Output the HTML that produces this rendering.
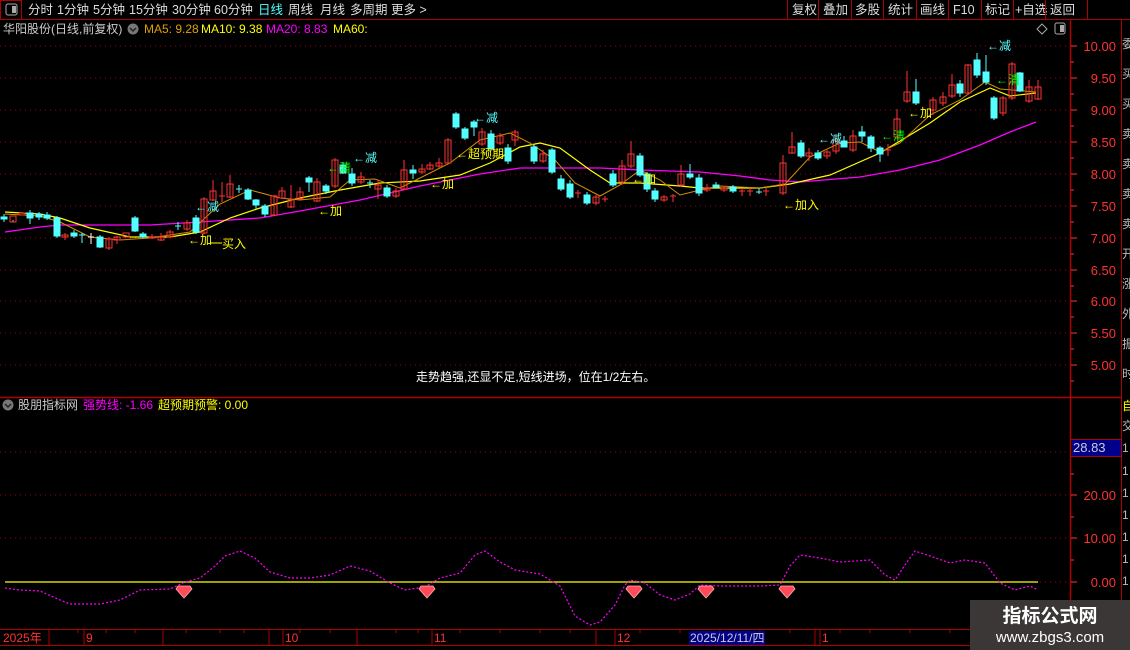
<!DOCTYPE html>
<html><head><meta charset="utf-8"><style>
body{margin:0;background:#000;width:1130px;height:650px;overflow:hidden;font-family:"Liberation Sans","Noto Sans CJK SC",sans-serif;font-size:12px;color:#ccc;position:relative}
.a{position:absolute;white-space:nowrap}
</style></head><body>
<svg width="1130" height="650" style="position:absolute;left:0;top:0" font-family="Liberation Sans, Noto Sans CJK SC, sans-serif" font-size="12">
<!-- top bar -->
<line x1="0" y1="19.5" x2="1130" y2="19.5" stroke="#b00000"/>
<rect x="0.5" y="0.5" width="21" height="19" fill="none" stroke="#b00000"/>
<rect x="6" y="4" width="11" height="11" rx="2" fill="none" stroke="#aaa"/><rect x="12" y="6" width="4" height="7" fill="#aaa"/>
<g fill="#ddd" font-size="12.5">
<text x="28" y="14">分时</text><text x="57" y="14">1分钟</text><text x="93" y="14">5分钟</text><text x="129" y="14">15分钟</text><text x="172" y="14">30分钟</text><text x="214" y="14">60分钟</text>
<text x="258" y="14" fill="#54ffff">日线</text><text x="288" y="14">周线</text><text x="320" y="14">月线</text><text x="350" y="14">多周期</text><text x="391" y="14">更多 &gt;</text>
<text x="792" y="14">复权</text><text x="823" y="14">叠加</text><text x="855" y="14">多股</text><text x="888" y="14">统计</text><text x="920" y="14">画线</text><text x="953" y="14">F10</text><text x="985" y="14">标记</text><text x="1015" y="14">+自选</text><text x="1050" y="14">返回</text>
</g>
<g stroke="#b00000"><line x1="787.5" y1="0" x2="787.5" y2="19"/><line x1="818.5" y1="0" x2="818.5" y2="19"/><line x1="851.5" y1="0" x2="851.5" y2="19"/><line x1="883.5" y1="0" x2="883.5" y2="19"/><line x1="916.5" y1="0" x2="916.5" y2="19"/><line x1="948.5" y1="0" x2="948.5" y2="19"/><line x1="981.5" y1="0" x2="981.5" y2="19"/><line x1="1013.5" y1="0" x2="1013.5" y2="19"/><line x1="1045.5" y1="0" x2="1045.5" y2="19"/><line x1="1087.5" y1="0" x2="1087.5" y2="19"/></g>
<!-- title -->
<text x="3" y="33" fill="#ccc">华阳股份(日线,前复权)</text>
<circle cx="133" cy="29" r="5.5" fill="#777"/><path d="M130 28l3 3 3-3" stroke="#222" fill="none" stroke-width="1.5"/>
<text x="144" y="33" fill="#e0a000">MA5: 9.28</text><text x="201" y="33" fill="#ffff00">MA10: 9.38</text><text x="266" y="33" fill="#ff00ff">MA20: 8.83</text><text x="333" y="33" fill="#ffff00">MA60:</text>
<path d="M1042 24l5 5-5 5-5-5z" fill="none" stroke="#aaa"/>
<rect x="1055" y="23" width="10" height="11" rx="2" fill="none" stroke="#aaa"/><rect x="1060" y="25" width="4" height="7" fill="#aaa"/>
<!-- frame -->
<line x1="1070.5" y1="20" x2="1070.5" y2="650" stroke="#b00000" stroke-width="1.5"/>
<line x1="1121.5" y1="20" x2="1121.5" y2="650" stroke="#b00000"/>
<line x1="0" y1="397.5" x2="1121" y2="397.5" stroke="#b00000" stroke-width="1.5"/>
<line x1="0" y1="629.5" x2="1070" y2="629.5" stroke="#b00000"/>
<line x1="0" y1="645.5" x2="1070" y2="645.5" stroke="#b00000"/>
<!-- grid -->
<g stroke="#a00000" stroke-dasharray="1 4">
<line x1="0" y1="46" x2="1068" y2="46"/><line x1="0" y1="78" x2="1068" y2="78"/><line x1="0" y1="110" x2="1068" y2="110"/><line x1="0" y1="142" x2="1068" y2="142"/><line x1="0" y1="174" x2="1068" y2="174"/><line x1="0" y1="206" x2="1068" y2="206"/><line x1="0" y1="238" x2="1068" y2="238"/><line x1="0" y1="270" x2="1068" y2="270"/><line x1="0" y1="301" x2="1068" y2="301"/><line x1="0" y1="333" x2="1068" y2="333"/><line x1="0" y1="365" x2="1068" y2="365"/>
<line x1="0" y1="452" x2="1068" y2="452"/><line x1="0" y1="495" x2="1068" y2="495"/><line x1="0" y1="538" x2="1068" y2="538"/><line x1="1040" y1="582" x2="1068" y2="582"/>
</g>
<!-- price axis -->
<g fill="#ff3232" font-size="13" text-anchor="end">
<text x="1116" y="51">10.00</text><text x="1116" y="83">9.50</text><text x="1116" y="115">9.00</text><text x="1116" y="147">8.50</text><text x="1116" y="179">8.00</text><text x="1116" y="211">7.50</text><text x="1116" y="243">7.00</text><text x="1116" y="275">6.50</text><text x="1116" y="306">6.00</text><text x="1116" y="338">5.50</text><text x="1116" y="370">5.00</text>
<text x="1116" y="500">20.00</text><text x="1116" y="543">10.00</text><text x="1116" y="587">0.00</text>
</g>
<g stroke="#ff3232"><path d="M1071 46h6M1071 62h3M1071 78h6M1071 94h3M1071 110h6M1071 126h3M1071 142h6M1071 158h3M1071 174h6M1071 190h3M1071 206h6M1071 222h3M1071 238h6M1071 254h3M1071 270h6M1071 286h3M1071 301h6M1071 317h3M1071 333h6M1071 349h3M1071 365h6M1071 381h3M1071 495h6M1071 538h6M1071 582h6M1071 474h3M1071 517h3M1071 560h3"/></g>
<rect x="1072" y="440" width="49" height="16" fill="#00008b"/><line x1="1071" y1="439.5" x2="1121" y2="439.5" stroke="#b00000"/><line x1="1071" y1="456.5" x2="1121" y2="456.5" stroke="#b00000"/>
<text x="1073" y="452" fill="#ccc" font-size="13">28.83</text>
<g fill="#bbb" font-size="12"><text x="1122" y="48">委</text><text x="1122" y="78">买</text><text x="1122" y="108">买</text><text x="1122" y="138">卖</text><text x="1122" y="168">卖</text><text x="1122" y="198">卖</text><text x="1122" y="228">卖</text><text x="1122" y="258">开</text><text x="1122" y="288">涨</text><text x="1122" y="318">外</text><text x="1122" y="348">振</text><text x="1122" y="378">时</text>
<text x="1122" y="410" fill="#ffff00">自</text><text x="1122" y="430">交</text><text x="1122" y="452">1</text><text x="1122" y="475">1</text><text x="1122" y="497">1</text><text x="1122" y="519">1</text><text x="1122" y="541">1</text><text x="1122" y="563">1</text><text x="1122" y="585">1</text></g>
<!-- MA lines -->
<polyline fill="none" stroke="#ff00ff" stroke-width="1.3" points="5,232 40,227 60,225 100,225 150,225 200,222 260,218 300,211 360,200 420,186 480,174 520,168 540,168 600,168 640,170 700,172 740,176 770,180 800,182 860,177 900,170 940,160 980,145 1010,132 1036,122"/>
<polyline fill="none" stroke="#ffff00" stroke-width="1.2" points="5,212 40,214 60,218 90,228 130,237 170,237 200,232 230,218 260,208 300,198 340,190 380,183 420,181 460,175 490,163 520,147 540,143 560,148 590,170 610,183 640,183 680,186 700,188 720,188 760,188 790,184 830,175 880,153 930,123 960,102 990,88 1010,96 1036,93"/>
<polyline fill="none" stroke="#d09000" stroke-width="1" points="5,214 40,216 60,222 90,237 120,240 150,238 190,232 220,204 250,190 280,198 300,200 330,197 350,180 375,179 400,188 420,178 450,163 480,140 510,133 530,143 555,160 575,183 600,196 620,185 640,170 660,180 680,195 700,190 720,186 760,188 785,184 810,157 840,143 860,142 880,152 900,143 930,115 960,100 985,82 1000,89 1036,92"/>
<!-- candles -->
<g stroke-width="1">
<g fill="#54ffff" stroke="#54ffff">
<path d="M4 214v8M13 220v2"/><rect x="1" y="217" width="6" height="2"/>
<path d="M30 210v14"/><rect x="27" y="213" width="6" height="5"/>
<path d="M39 212v8"/><rect x="36" y="214" width="6" height="3"/>
<path d="M47 212v8"/><rect x="44" y="215" width="6" height="3"/>
<path d="M57 216v22"/><rect x="54" y="218" width="6" height="18"/>
<path d="M74 230v8"/><rect x="71" y="233" width="6" height="3"/>
<path d="M82 233v10M79 235h6"/>
<path d="M100 235v13"/><rect x="97" y="237" width="6" height="10"/>
<path d="M135 216v16"/><rect x="132" y="218" width="6" height="13"/>
<path d="M143 232v6"/><rect x="140" y="234" width="6" height="3"/>
<path d="M178 222v8M175 226h6"/>
<path d="M196 215v19"/><rect x="193" y="218" width="6" height="14"/>
<path d="M239 185v8M236 189h6"/>
<path d="M248 188v12"/><rect x="245" y="190" width="6" height="9"/>
<path d="M256 199v10"/><rect x="253" y="200" width="6" height="5"/>
<path d="M265 204v13"/><rect x="262" y="206" width="6" height="8"/>
<path d="M309 176v16"/><rect x="306" y="178" width="6" height="4"/>
<path d="M326 184v10"/><rect x="323" y="186" width="6" height="5"/>
<path d="M343 162v12"/><rect x="340" y="165" width="6" height="8"/>
<path d="M352 168v18"/><rect x="349" y="174" width="6" height="9"/>
<path d="M370 180v8M367 183h6"/>
<path d="M387 185v13"/><rect x="384" y="188" width="6" height="8"/>
<path d="M413 165v14"/><rect x="410" y="170" width="6" height="3"/>
<path d="M456 112v17"/><rect x="453" y="114" width="6" height="13"/>
<path d="M465 127v13"/><rect x="462" y="129" width="6" height="9"/>
<path d="M474 120v16"/><rect x="471" y="122" width="6" height="5"/>
<path d="M491 130v21"/><rect x="488" y="134" width="6" height="15"/>
<path d="M508 144v20"/><rect x="505" y="148" width="6" height="13"/>
<path d="M534 144v20"/><rect x="531" y="147" width="6" height="14"/>
<path d="M552 148v26"/><rect x="549" y="150" width="6" height="22"/>
<path d="M561 175v16"/><rect x="558" y="179" width="6" height="10"/>
<path d="M570 180v19"/><rect x="567" y="184" width="6" height="13"/>
<path d="M587 192v13"/><rect x="584" y="195" width="6" height="8"/>
<path d="M613 170v17"/><rect x="610" y="174" width="6" height="11"/>
<path d="M640 153v24"/><rect x="637" y="156" width="6" height="19"/>
<path d="M647 172v20"/><rect x="644" y="174" width="6" height="15"/>
<path d="M655 188v14"/><rect x="652" y="191" width="6" height="8"/>
<path d="M690 164v15"/><rect x="687" y="174" width="6" height="3"/>
<path d="M699 174v22"/><rect x="696" y="178" width="6" height="15"/>
<path d="M716 182v6"/><rect x="713" y="185" width="6" height="2"/>
<path d="M733 185v8"/><rect x="730" y="187" width="6" height="4"/>
<path d="M759 188v6M756 192h6"/>
<path d="M801 140v18"/><rect x="798" y="143" width="6" height="13"/>
<path d="M818 150v10"/><rect x="815" y="153" width="6" height="5"/>
<path d="M844 136v10"/><rect x="841" y="141" width="6" height="6"/>
<path d="M862 126v16"/><rect x="859" y="132" width="6" height="4"/>
<path d="M871 135v17"/><rect x="868" y="137" width="6" height="11"/>
<path d="M880 146v16"/><rect x="877" y="148" width="6" height="6"/>
<path d="M916 79v26"/><rect x="913" y="92" width="6" height="11"/>
<path d="M960 80v17"/><rect x="957" y="84" width="6" height="9"/>
<path d="M977 53v25"/><rect x="974" y="60" width="6" height="15"/>
<path d="M986 55v30"/><rect x="983" y="72" width="6" height="10"/>
<path d="M994 96v24"/><rect x="991" y="98" width="6" height="20"/>
<path d="M1020 72v20"/><rect x="1017" y="73" width="6" height="18"/>
</g>
<g fill="none" stroke="#ff3232">
<rect x="10" y="216" width="6" height="6"/><rect x="19" y="213" width="6" height="2"/>
<path d="M65 233v7"/><rect x="62" y="235" width="6" height="2"/>
<path d="M91 233v11M88 237h6" stroke="#fff"/>
<path d="M109 237v13"/><rect x="106" y="239" width="6" height="9"/>
<path d="M117 236v8"/><rect x="114" y="237" width="6" height="3"/>
<rect x="123" y="233" width="6" height="4"/>
<path d="M152 234v5"/><rect x="149" y="237" width="6" height="1"/>
<path d="M161 233v8"/><rect x="158" y="237" width="6" height="3"/>
<path d="M170 230v8"/><rect x="167" y="232" width="6" height="5"/>
<path d="M187 220v11"/><rect x="184" y="223" width="6" height="6"/>
<path d="M204 197v37"/><rect x="201" y="199" width="6" height="34"/>
<path d="M213 180v21"/><rect x="210" y="191" width="6" height="9"/>
<path d="M222 182v20M219 196h6"/>
<path d="M230 175v23"/><rect x="227" y="184" width="6" height="13"/>
<path d="M274 195v21"/><rect x="271" y="196" width="6" height="19"/>
<path d="M282 187v12"/><rect x="279" y="191" width="6" height="7"/>
<path d="M291 185v23"/><rect x="288" y="200" width="6" height="7"/>
<path d="M300 187v13"/><rect x="297" y="192" width="6" height="7"/>
<path d="M317 178v24"/><rect x="314" y="182" width="6" height="19"/>
<path d="M335 158v30"/><rect x="332" y="160" width="6" height="26"/>
<path d="M361 172v12"/><rect x="358" y="177" width="6" height="5"/>
<path d="M378 180v19"/><rect x="375" y="185" width="6" height="4"/>
<path d="M396 188v10"/><rect x="393" y="191" width="6" height="5"/>
<path d="M404 160v30"/><rect x="401" y="170" width="6" height="19"/>
<path d="M422 164v10"/><rect x="419" y="169" width="6" height="3"/>
<path d="M430 162v8"/><rect x="427" y="165" width="6" height="4"/>
<path d="M439 158v10"/><rect x="436" y="163" width="6" height="3"/>
<path d="M448 138v26"/><rect x="445" y="140" width="6" height="23"/>
<path d="M482 128v18"/><rect x="479" y="132" width="6" height="12"/>
<path d="M500 133v12"/><rect x="497" y="136" width="6" height="7"/>
<path d="M515 130v16"/><rect x="512" y="132" width="6" height="8"/>
<path d="M543 150v13"/><rect x="540" y="154" width="6" height="7"/>
<path d="M578 190v8M575 193h6"/>
<path d="M596 195v10"/><rect x="593" y="197" width="6" height="6"/>
<path d="M605 196v6M602 199h6"/>
<path d="M622 160v25"/><rect x="619" y="166" width="6" height="16"/>
<path d="M631 141v27"/><rect x="628" y="154" width="6" height="12"/>
<path d="M664 195v7"/><rect x="661" y="197" width="6" height="3"/>
<path d="M673 194v8M670 196h6"/>
<path d="M681 165v22"/><rect x="678" y="174" width="6" height="11"/>
<path d="M707 184v8"/><rect x="704" y="188" width="6" height="2"/>
<path d="M724 186v6"/><rect x="721" y="188" width="6" height="2"/>
<path d="M742 188v8M739 191h6"/>
<path d="M750 188v8M747 191h6"/>
<path d="M766 188v8M763 191h6"/>
<path d="M783 155v40"/><rect x="780" y="163" width="6" height="30"/>
<path d="M792 132v22"/><rect x="789" y="147" width="6" height="6"/>
<path d="M809 148v13"/><rect x="806" y="153" width="6" height="3"/>
<path d="M827 150v9"/><rect x="824" y="152" width="6" height="4"/>
<path d="M836 134v20"/><rect x="833" y="140" width="6" height="11"/>
<path d="M853 130v22"/><rect x="850" y="136" width="6" height="14"/>
<path d="M888 144v12M885 150h6"/>
<path d="M897 109v30"/><rect x="894" y="119" width="6" height="18"/>
<path d="M907 71v32"/><rect x="904" y="92" width="6" height="9"/>
<path d="M933 97v18"/><rect x="930" y="100" width="6" height="10"/>
<path d="M943 92v14"/><rect x="940" y="97" width="6" height="6"/>
<path d="M952 74v24"/><rect x="949" y="85" width="6" height="11"/>
<path d="M968 64v31"/><rect x="965" y="65" width="6" height="28"/>
<path d="M1003 96v20"/><rect x="1000" y="98" width="6" height="15"/>
<path d="M1012 62v38"/><rect x="1009" y="64" width="6" height="34"/>
<path d="M1029 80v23"/><rect x="1026" y="87" width="6" height="14"/>
<path d="M1038 80v20"/><rect x="1035" y="87" width="6" height="12"/>
</g>
</g>
<!-- annotations -->
<g font-size="12">
<text x="195" y="211" fill="#54ffff">←减</text>
<text x="188" y="244" fill="#ffff00">←加</text><text x="222" y="248" fill="#ffff00">买入</text><line x1="210" y1="243" x2="222" y2="243" stroke="#ffff00"/>
<text x="318" y="215" fill="#ffff00">←加</text>
<text x="327" y="172" fill="#00ff00">←清</text>
<text x="353" y="162" fill="#54ffff">←减</text>
<text x="430" y="188" fill="#ffff00">←加</text>
<text x="456" y="158" fill="#ffff00">←超预期</text>
<text x="474" y="122" fill="#54ffff">←减</text>
<text x="632" y="183" fill="#ffff00">←加</text>
<text x="783" y="209" fill="#ffff00">←加入</text>
<text x="818" y="143" fill="#54ffff">←减</text>
<text x="881" y="140" fill="#00ff00">←清</text>
<text x="908" y="117" fill="#ffff00">←加</text>
<text x="996" y="84" fill="#00ff00">←清</text>
<text x="987" y="50" fill="#54ffff">←减</text>
<text x="416" y="381" fill="#fff">走势趋强,还显不足,短线进场，位在1/2左右。</text>
</g>
<!-- indicator panel -->
<circle cx="8" cy="405" r="5.5" fill="#777"/><path d="M5 404l3 3 3-3" stroke="#222" fill="none" stroke-width="1.5"/>
<text x="18" y="409" fill="#ccc">股朋指标网</text><text x="83" y="409" fill="#ff00ff">强势线: -1.66</text><text x="158" y="409" fill="#ffff00">超预期预警: 0.00</text>
<line x1="5" y1="582" x2="1038" y2="582" stroke="#ffff00" stroke-width="1.3"/>
<polyline fill="none" stroke="#ff00ff" stroke-width="1.2" stroke-dasharray="2 2" points="5,588 20,590 40,591 60,600 70,604 100,604 120,600 140,590 170,589 185,582 200,578 215,566 225,556 240,551 255,558 270,572 290,578 310,578 330,575 350,566 370,571 390,583 405,590 425,587 440,578 460,573 475,555 485,551 500,562 515,570 540,574 560,586 575,616 590,625 600,622 615,605 625,585 630,580 645,583 660,595 675,600 690,594 700,585 720,586 760,586 780,585 790,566 800,555 820,558 840,562 870,560 885,575 895,580 905,565 915,551 930,556 950,563 965,560 985,563 1000,583 1015,590 1030,586 1038,590"/>
<g fill="#ff4a5a" stroke="#ffb0b0" stroke-width="0.8">
<path d="M178 586h12l2 3-8 9-8-9z"/><path d="M421 586h12l2 3-8 9-8-9z"/><path d="M628 586h12l2 3-8 9-8-9z"/><path d="M700 586h12l2 3-8 9-8-9z"/><path d="M781 586h12l2 3-8 9-8-9z"/>
</g>
<!-- time axis -->
<g stroke="#b00000"><path d="M49 630v15M163 630v15M269 630v15M357 630v15M596 630v15M815 630v15M78 630v3M106 630v3M135 630v3M186 630v3M220 630v3M244 630v3M300 630v3M330 630v3M396 630v3M418 630v3M460 630v3M500 630v3M540 630v3M570 630v3M640 630v3M680 630v3M720 630v3M760 630v3M790 630v3M840 630v3M870 630v3M910 630v3M950 630v3"/></g>
<g stroke="#b00000"><path d="M84 630v15M283 630v15M432 630v15M615 630v15M820 630v15"/></g>
<rect x="689" y="631" width="76" height="14" fill="#00008b"/>
<g fill="#ff3232" font-size="12"><text x="3" y="642">2025年</text><text x="86" y="642">9</text><text x="285" y="642">10</text><text x="434" y="642">11</text><text x="617" y="642">12</text><text x="822" y="642">1</text></g>
<text x="690" y="642" fill="#ccc" font-size="12">2025/12/11/四</text>
<!-- watermark -->
<rect x="970" y="600" width="160" height="50" fill="#3a3736"/>
<text x="1050" y="622" fill="#fff" font-size="19" font-weight="bold" text-anchor="middle">指标公式网</text>
<text x="1050" y="642" fill="#fff" font-size="15" text-anchor="middle">www.zbgs3.com</text>
</svg>
</body></html>
